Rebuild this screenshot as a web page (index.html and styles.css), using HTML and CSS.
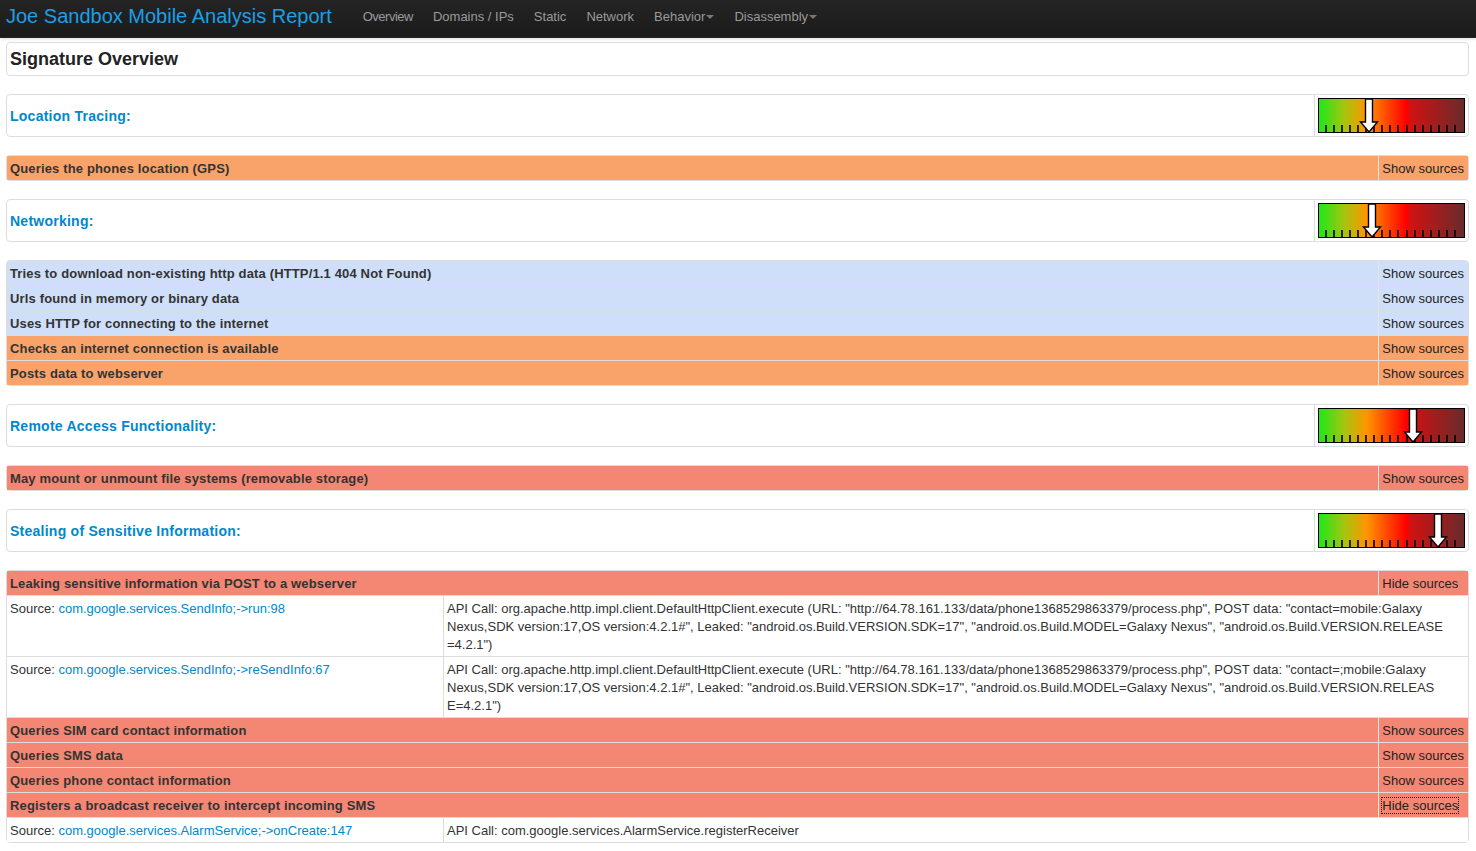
FILE: index.html
```html
<!DOCTYPE html>
<html>
<head>
<meta charset="utf-8">
<title>Joe Sandbox Mobile Analysis Report</title>
<link rel="stylesheet" href="styles.css">
</head>
<body>
<div class="navbar">
  <a class="brand">Joe Sandbox Mobile Analysis Report</a>
  <ul class="nav">
    <li class="narrow">Overview</li>
    <li>Domains / IPs</li>
    <li>Static</li>
    <li>Network</li>
    <li>Behavior<b class="caret"></b></li>
    <li>Disassembly<b class="caret"></b></li>
  </ul>
</div>

<div class="content">
  <div class="overview-box">Signature Overview</div>

  <table class="cat">
    <tr>
      <td class="cat-label">Location Tracing:</td>
      <td class="cat-meter">
        <svg class="meter" width="147" height="35" viewBox="0 0 147 35">
          <defs><linearGradient id="g1"><stop offset="0" stop-color="#1de81a"/><stop offset="0.18" stop-color="#a8c40e"/><stop offset="0.33" stop-color="#ff9500"/><stop offset="0.6" stop-color="#ff0000"/><stop offset="0.63" stop-color="#d11212"/><stop offset="1" stop-color="#692b2b"/></linearGradient></defs>
          <rect x="0.5" y="0.5" width="146" height="34" fill="url(#g1)" stroke="#000"/>
          <path d="M8 27V34M16 27V34M24 27V34M32 27V34M40 27V34M48 27V34M56 27V34M64 27V34M72 27V34M80 27V34M89 27V34M97 27V34M105 27V34M113 27V34M121 27V34M129 27V34M137 27V34" stroke="#000" stroke-width="1.6"/>
          <polygon points="47.5,1 54.5,1 54.5,24 59.5,24 51,34 42.5,24 47.5,24" fill="#fff" stroke="#000" stroke-width="1.4"/>
        </svg>
      </td>
    </tr>
  </table>
  <table class="sig">
    <tr class="orange"><td class="lbl">Queries the phones location (GPS)</td><td class="show">Show sources</td></tr>
  </table>

  <table class="cat">
    <tr>
      <td class="cat-label">Networking:</td>
      <td class="cat-meter">
        <svg class="meter" width="147" height="35" viewBox="0 0 147 35">
          <defs><linearGradient id="g2"><stop offset="0" stop-color="#1de81a"/><stop offset="0.18" stop-color="#a8c40e"/><stop offset="0.33" stop-color="#ff9500"/><stop offset="0.6" stop-color="#ff0000"/><stop offset="0.63" stop-color="#d11212"/><stop offset="1" stop-color="#692b2b"/></linearGradient></defs>
          <rect x="0.5" y="0.5" width="146" height="34" fill="url(#g2)" stroke="#000"/>
          <path d="M8 27V34M16 27V34M24 27V34M32 27V34M40 27V34M48 27V34M56 27V34M64 27V34M72 27V34M80 27V34M89 27V34M97 27V34M105 27V34M113 27V34M121 27V34M129 27V34M137 27V34" stroke="#000" stroke-width="1.6"/>
          <polygon points="50.5,1 57.5,1 57.5,24 62.5,24 54,34 45.5,24 50.5,24" fill="#fff" stroke="#000" stroke-width="1.4"/>
        </svg>
      </td>
    </tr>
  </table>
  <table class="sig">
    <tr class="blue"><td class="lbl">Tries to download non-existing http data (HTTP/1.1 404 Not Found)</td><td class="show">Show sources</td></tr>
    <tr class="blue"><td class="lbl">Urls found in memory or binary data</td><td class="show">Show sources</td></tr>
    <tr class="blue"><td class="lbl">Uses HTTP for connecting to the internet</td><td class="show">Show sources</td></tr>
    <tr class="orange"><td class="lbl">Checks an internet connection is available</td><td class="show">Show sources</td></tr>
    <tr class="orange"><td class="lbl">Posts data to webserver</td><td class="show">Show sources</td></tr>
  </table>

  <table class="cat">
    <tr>
      <td class="cat-label">Remote Access Functionality:</td>
      <td class="cat-meter">
        <svg class="meter" width="147" height="35" viewBox="0 0 147 35">
          <defs><linearGradient id="g3"><stop offset="0" stop-color="#1de81a"/><stop offset="0.18" stop-color="#a8c40e"/><stop offset="0.33" stop-color="#ff9500"/><stop offset="0.6" stop-color="#ff0000"/><stop offset="0.63" stop-color="#d11212"/><stop offset="1" stop-color="#692b2b"/></linearGradient></defs>
          <rect x="0.5" y="0.5" width="146" height="34" fill="url(#g3)" stroke="#000"/>
          <path d="M8 27V34M16 27V34M24 27V34M32 27V34M40 27V34M48 27V34M56 27V34M64 27V34M72 27V34M80 27V34M89 27V34M97 27V34M105 27V34M113 27V34M121 27V34M129 27V34M137 27V34" stroke="#000" stroke-width="1.6"/>
          <polygon points="91.5,1 98.5,1 98.5,24 103.5,24 95,34 86.5,24 91.5,24" fill="#fff" stroke="#000" stroke-width="1.4"/>
        </svg>
      </td>
    </tr>
  </table>
  <table class="sig">
    <tr class="salmon"><td class="lbl">May mount or unmount file systems (removable storage)</td><td class="show">Show sources</td></tr>
  </table>

  <table class="cat">
    <tr>
      <td class="cat-label">Stealing of Sensitive Information:</td>
      <td class="cat-meter">
        <svg class="meter" width="147" height="35" viewBox="0 0 147 35">
          <defs><linearGradient id="g4"><stop offset="0" stop-color="#1de81a"/><stop offset="0.18" stop-color="#a8c40e"/><stop offset="0.33" stop-color="#ff9500"/><stop offset="0.6" stop-color="#ff0000"/><stop offset="0.63" stop-color="#d11212"/><stop offset="1" stop-color="#692b2b"/></linearGradient></defs>
          <rect x="0.5" y="0.5" width="146" height="34" fill="url(#g4)" stroke="#000"/>
          <path d="M8 27V34M16 27V34M24 27V34M32 27V34M40 27V34M48 27V34M56 27V34M64 27V34M72 27V34M80 27V34M89 27V34M97 27V34M105 27V34M113 27V34M121 27V34M129 27V34M137 27V34" stroke="#000" stroke-width="1.6"/>
          <polygon points="116.5,1 123.5,1 123.5,24 128.5,24 120,34 111.5,24 116.5,24" fill="#fff" stroke="#000" stroke-width="1.4"/>
        </svg>
      </td>
    </tr>
  </table>
  <table class="sig">
    <tr class="salmon"><td class="lbl" colspan="2">Leaking sensitive information via POST to a webserver</td><td class="show">Hide sources</td></tr>
    <tr class="src">
      <td class="src-l">Source: <a>com.google.services.SendInfo;-&gt;run:98</a></td>
      <td class="src-r" colspan="2">API Call: org.apache.http.impl.client.DefaultHttpClient.execute (URL: "http://64.78.161.133/data/phone1368529863379/process.php", POST data: "contact=mobile:Galaxy Nexus,SDK version:17,OS version:4.2.1#", Leaked: "android.os.Build.VERSION.SDK=17", "android.os.Build.MODEL=Galaxy Nexus", "android.os.Build.VERSION.RELEASE<wbr>=4.2.1")</td>
    </tr>
    <tr class="src">
      <td class="src-l">Source: <a>com.google.services.SendInfo;-&gt;reSendInfo:67</a></td>
      <td class="src-r" colspan="2">API Call: org.apache.http.impl.client.DefaultHttpClient.execute (URL: "http://64.78.161.133/data/phone1368529863379/process.php", POST data: "contact=;mobile:Galaxy Nexus,SDK version:17,OS version:4.2.1#", Leaked: "android.os.Build.VERSION.SDK=17", "android.os.Build.MODEL=Galaxy Nexus", "android.os.Build.VERSION.RELEAS<wbr>E=4.2.1")</td>
    </tr>
    <tr class="salmon"><td class="lbl" colspan="2">Queries SIM card contact information</td><td class="show">Show sources</td></tr>
    <tr class="salmon"><td class="lbl" colspan="2">Queries SMS data</td><td class="show">Show sources</td></tr>
    <tr class="salmon"><td class="lbl" colspan="2">Queries phone contact information</td><td class="show">Show sources</td></tr>
    <tr class="salmon"><td class="lbl" colspan="2">Registers a broadcast receiver to intercept incoming SMS</td><td class="show"><span class="focus">Hide sources</span></td></tr>
    <tr class="src">
      <td class="src-l">Source: <a>com.google.services.AlarmService;-&gt;onCreate:147</a></td>
      <td class="src-r" colspan="2">API Call: com.google.services.AlarmService.registerReceiver</td>
    </tr>
  </table>
</div>
</body>
</html>
```

FILE: styles.css
```css
html, body {
  margin: 0;
  padding: 0;
  background: #fff;
}
body {
  font-family: "Liberation Sans", Arial, Helvetica, sans-serif;
  font-size: 13px;
  color: #333;
}

.navbar {
  display: flex;
  align-items: flex-start;
  height: 38px;
  background: linear-gradient(#242424, #1b1b1b);
  border-bottom: 1px solid #252525;
  box-sizing: border-box;
  box-shadow: 0 1px 3px rgba(0,0,0,0.15);
}
.brand {
  font-size: 20px;
  line-height: 33px;
  color: #1d9fe6;
  padding-left: 6px;
  margin-right: 21px;
  white-space: nowrap;
}
.nav {
  display: flex;
  list-style: none;
  margin: 0;
  padding: 0;
}
.nav li {
  padding: 0 10px;
  line-height: 33px;
  color: #9a9a9a;
  font-size: 13px;
  white-space: nowrap;
}
.nav li.narrow {
  letter-spacing: -0.5px;
}
.caret {
  display: inline-block;
  width: 0;
  height: 0;
  border-top: 4px solid #777;
  border-left: 4px solid transparent;
  border-right: 4px solid transparent;
  vertical-align: middle;
  margin-left: 1px;
  margin-top: -2px;
}

.content {
  padding: 4px 7px 0 6px;
}

.overview-box {
  border: 1px solid #ddd;
  border-radius: 4px;
  padding: 6px 3px;
  font-size: 18px;
  line-height: 20px;
  font-weight: bold;
  color: #222;
  margin-bottom: 18px;
}

table {
  width: 100%;
  border-collapse: separate;
  border-spacing: 0;
  border: 1px solid #ddd;
  border-radius: 4px;
  margin-bottom: 18px;
}

.cat td {
  padding: 3px;
  vertical-align: middle;
}
.cat-label {
  font-size: 14px;
  font-weight: bold;
  color: #0088cc;
  letter-spacing: 0.25px;
}
.cat-meter {
  width: 147px;
  border-left: 1px solid #ddd;
}
.meter {
  display: block;
}

.sig td {
  padding: 4px 4px 2px 3px;
  line-height: 18px;
  vertical-align: top;
  border-top: 1px solid #ddd;
}
.sig tr:first-child td {
  border-top: 0;
}
.sig .lbl {
  font-weight: bold;
  letter-spacing: 0.15px;
}
.sig .show {
  width: 1px;
  white-space: nowrap;
  border-left: 1px solid #e6e6e6;
  color: #222;
}
.orange td { background: #f9a36b; }
.blue td { background: #cfdff9; }
.salmon td { background: #f38773; }

.src td {
  background: #fff;
}
.src-l {
  width: 429px;
}
.src-r {
  border-left: 1px solid #ddd;
}
.src a {
  color: #0088cc;
}
.focus {
  outline: 1px dotted #000;
}
```
